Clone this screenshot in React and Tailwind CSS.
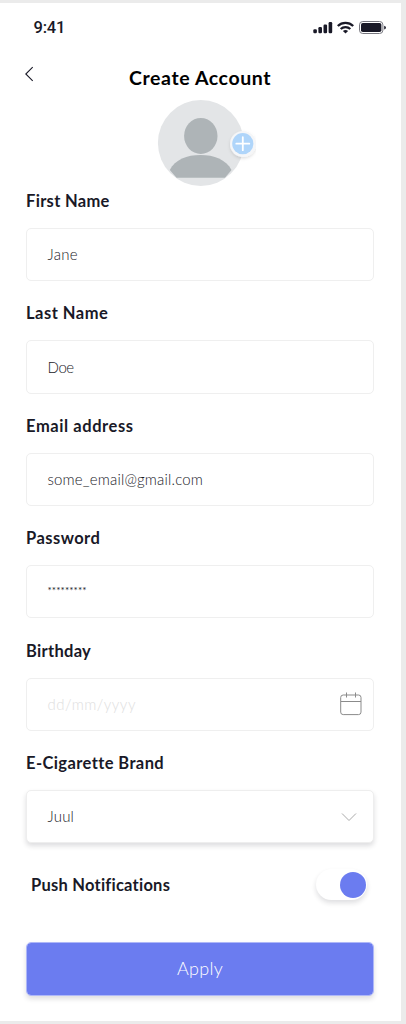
function Field({ label, labelClass, children, boxClass = "border-[#efefef]" }) {
  return (
    <div className="h-[112.4px]">
      <div className={`h-6 whitespace-nowrap text-[16.5px] leading-6 font-bold text-[#191927] ${labelClass}`}>{label}</div>
      <div
        className={`mt-[15px] flex h-[53.3px] items-center justify-between rounded-[5px] border bg-white pl-[20.5px] pr-[11.5px] text-[15px] ${boxClass}`}
      >
        {children}
      </div>
    </div>
  );
}

function StatusBar() {
  return (
    <div className="flex h-[49px] items-center justify-between pl-[33.5px] pr-[13.5px]">
      <span className="font-['Roboto',sans-serif] text-[16.5px] leading-5 font-medium tracking-[-0.2px] text-[#191927]">9:41</span>
      <svg className="mb-px" width="74" height="14" viewBox="0 0 74 14" fill="#191927">
        <rect x="0.3" y="9.2" width="3.6" height="4" rx="1.2" />
        <rect x="5.4" y="7" width="3.6" height="6.2" rx="1.2" />
        <rect x="10.5" y="4.6" width="3.6" height="8.6" rx="1.2" />
        <rect x="15.6" y="2" width="3.6" height="11.2" rx="1.2" />
        <g fill="none" stroke="#191927" strokeWidth="2.3">
          <path d="M24.8 6a11.1 11.1 0 0 1 15.4 0" />
          <path d="M27.7 9a7 7 0 0 1 9.6 0" />
        </g>
        <path d="M29.9 11.1a4 4 0 0 1 5.2 0l-2.6 2.5z" />
        <rect x="46.5" y="1.5" width="23.4" height="12" rx="3.3" fill="none" stroke="#77777f" />
        <rect x="48" y="3" width="20.4" height="9" rx="1.8" />
        <path d="M71.2 5.7v3.8q1.8-.6 1.8-1.9t-1.8-1.9z" />
      </svg>
    </div>
  );
}

function Avatar() {
  return (
    <svg className="mx-auto block" width="110" height="90" viewBox="0 0 110 90">
      <defs>
        <clipPath id="face"><circle cx="54.8" cy="44" r="42.9" /></clipPath>
        <filter id="soft" x="-50%" y="-50%" width="200%" height="200%">
          <feDropShadow dx="0" dy="1.5" stdDeviation="1.5" floodOpacity=".13" />
        </filter>
      </defs>
      <circle cx="54.8" cy="44" r="42.9" fill="#e3e5e7" />
      <g clipPath="url(#face)" fill="#aeb4b7">
        <ellipse cx="54.8" cy="36.9" rx="16.7" ry="18" />
        <path d="M23.8 71C29 60.5 41 56 54.5 56S80 60.5 85.5 71L79 78.800H30.500Z" />
      </g>
      <circle cx="97" cy="45" r="13" fill="#f5f6f8" filter="url(#soft)" />
      <circle cx="96.8" cy="44.7" r="10.6" fill="#afd5fa" />
      <path d="M96.8 38.2v13M90.3 44.7h13" stroke="#fff" strokeWidth="1.8" strokeLinecap="round" />
    </svg>
  );
}

export default function App() {
  return (
    <div className="h-[1024px] w-[406px] bg-[#ebebeb] pt-[3px] pr-[5.5px] pb-[3px] font-['Lato','Open_Sans',sans-serif]">
      <main className="h-full overflow-hidden bg-white">
        <StatusBar />
        <header className="flex h-[46px] items-center">
          <button className="ml-6 mb-[2px] block w-[105px]" aria-label="Back">
            <svg width="10" height="16" viewBox="0 0 10 16" fill="none" stroke="#191927" strokeWidth="1.1">
              <path d="M8.7 1.2 1.8 8l6.9 6.8" />
            </svg>
          </button>
          <h1 className="mt-[6px] whitespace-nowrap text-[19.5px] leading-6 font-bold tracking-[0.6px] text-black">Create Account</h1>
        </header>
        <div className="mt-px ml-[0.5px] h-[90px]"><Avatar /></div>
        <form className="ml-[26px] w-[348px]">
          <Field label="First Name" labelClass="tracking-[0.32px]">
            <span className="font-light tracking-[0.25px] text-[#191927]">Jane</span>
          </Field>
          <Field label="Last Name" labelClass="tracking-[0.5px]">
            <span className="font-light tracking-[-0.4px] text-[#191927]">Doe</span>
          </Field>
          <Field label="Email address" labelClass="tracking-[0.58px]">
            <span className="font-light tracking-[0.17px] text-[#191927]">some_email@gmail.com</span>
          </Field>
          <Field label="Password" labelClass="tracking-[0.45px]">
            <span className="mb-0.5 text-[10px] font-normal tracking-[0.1px] text-[#191927]">*********</span>
          </Field>
          <Field label="Birthday" labelClass="tracking-[0.3px]">
            <span className="font-light tracking-[0.5px] text-[#dedede]">dd/mm/yyyy</span>
            <svg width="22" height="24" viewBox="0 0 22 24" fill="none" stroke="#8b8b8b">
              <rect x="0.7" y="3" width="20.3" height="19.6" rx="2.5" />
              <path d="M1 9.5h20M6.5.5v5M15.5.5v5" />
            </svg>
          </Field>
          <Field
            label="E-Cigarette Brand"
            labelClass="tracking-[0.4px]"
            boxClass="border-[#eeeeee] shadow-[0_3px_5px_rgba(25,25,39,0.15)]"
          >
            <span className="font-light tracking-[0.2px] text-[#191927]">Juul</span>
            <svg className="mr-[5px]" width="16" height="10" viewBox="0 0 16 10" fill="none" stroke="#aaa">
              <path d="m1 1.5 7 7 7-7" />
            </svg>
          </Field>
          <div className="-mt-[5.4px] flex h-[54px] items-center justify-between pl-[5px] pr-[7px]">
            <span className="whitespace-nowrap text-[16.5px] leading-6 font-bold tracking-[0.24px] text-[#191927]">Push Notifications</span>
            <div className="flex h-[31px] w-[51px] items-center justify-end rounded-full bg-white pr-px shadow-[0_3px_5px_rgba(25,25,39,0.14)]">
              <div className="size-[26px] rounded-full bg-[#6b7cf0]" />
            </div>
          </div>
          <button
            type="button"
            className="mt-[30px] h-[54px] w-full rounded-[5px] border border-[#aeb7f8] bg-[#6b7cf0] bg-clip-padding text-[18px] font-light tracking-[0.3px] text-white shadow-[0_3px_5px_rgba(25,25,39,0.14)]"
          >
            Apply
          </button>
        </form>
      </main>
    </div>
  );
}
